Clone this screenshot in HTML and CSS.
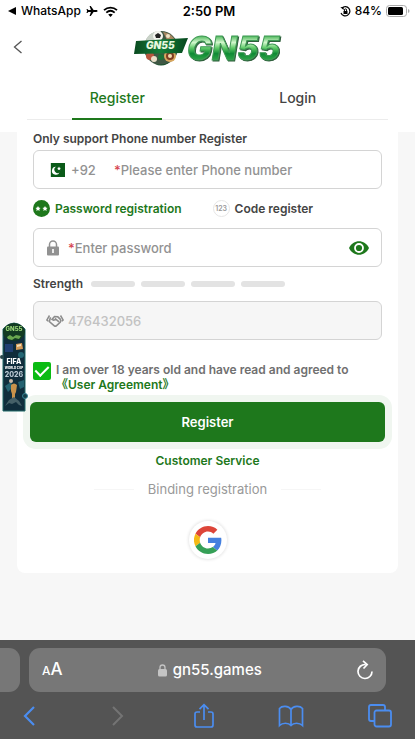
FILE: index.html
```html
<!DOCTYPE html>
<html lang="en">
<head>
    <meta charset="UTF-8">
    <meta name="viewport" content="width=device-width, initial-scale=1">
    <title>GN55 Register</title>
    <link rel="stylesheet" href="styles.css">
</head>
<body>
<!-- status bar -->
<div class="status">
    <div class="status-left">
        <svg width="8" height="10" viewBox="0 0 8 10"><path d="M8 1v8L0 5z"/></svg>
        <span>WhatsApp</span>
        <svg class="plane" width="12" height="12" viewBox="0 0 12 12"><path d="M11.5 6c0-.6-.5-.9-1.200-.9H7.600L4.800 1H3.600l1.300 4.100H2.400L1.300 3.900H.500L1.100 6 .500 8.100h.8l1.100-1.200h2.500L3.600 11h1.200l2.800-4.100h2.700c.7 0 1.200-.3 1.200-.9z"/></svg>
        <svg width="15" height="11" viewBox="0 0 15 11"><path d="M1 4.200C4.800.8 10.200.8 14 4.200M3.300 6.600c2.500-2.200 5.900-2.200 8.400 0" fill="none" stroke="#000" stroke-width="1.800"/><path d="M5.200 8.600c1.400-1.200 3.200-1.200 4.600 0L7.500 11z"/></svg>
    </div>
    <div class="status-time">2:50 PM</div>
    <div class="status-right">
        <svg width="11" height="11" viewBox="0 0 11 11"><path d="M2 2a4.600 4.600 0 1 1-1 5" fill="none" stroke="#000" stroke-width="1.200"/><path d="M.300 1.200 3.700 1v3z"/><path d="M3.500 5h4v3h-4z"/><path d="M4.400 5.200V4a1.100 1.100 0 0 1 2.200 0v1.200" fill="none" stroke="#000"/></svg>
        <span>84%</span>
        <svg width="24" height="12" viewBox="0 0 24 12"><rect x=".5" y=".5" width="20" height="11" rx="3" fill="none" stroke="#aaa"/><rect x="2" y="2" width="15" height="8" rx="1.500"/><path d="M22 4v4q1.500-.5 1.500-2T22 4z" fill="#aaa"/></svg>
    </div>
</div>

<!-- header -->
<header class="header">
    <button class="back" type="button" aria-label="Back">
        <svg width="10" height="14" viewBox="0 0 10 14"><path d="M8.500 1 1.500 7l7 6" fill="none" stroke="#555" stroke-width="1.300"/></svg>
    </button>
    <a class="logo" href="#" aria-label="GN55">
        <svg width="154" height="46" viewBox="-2 -4 154 46">
            <defs>
                <linearGradient id="shine" x1="0" y1="0" x2="0" y2="1">
                    <stop offset="0.2" stop-color="#4fb85c"/>
                    <stop offset="0.36" stop-color="#d3f7cd"/>
                    <stop offset="0.5" stop-color="#5fca68"/>
                    <stop offset="0.64" stop-color="#0f8a34"/>
                    <stop offset="0.8" stop-color="#2ea548"/>
                </linearGradient>
                <linearGradient id="ribbon">
                    <stop offset="0" stop-color="#0a4a20"/>
                    <stop offset="0.5" stop-color="#15803a"/>
                    <stop offset="1" stop-color="#06471d"/>
                </linearGradient>
            </defs>
            <circle cx="28" cy="20" r="17" fill="#3f5744"/>
            <path d="M12 14C15 5 22 3 28 3l-4 9z" fill="#c9d2c8"/>
            <path d="M30 4c7 1 11 5 13 10l-9-2z" fill="#a98862"/>
            <circle cx="25" cy="8" r="5" fill="#f3f4ee"/>
            <path d="m25 5 3 2-1 3h-4l-1-3z" fill="#222"/>
            <circle cx="35" cy="8" r="2" fill="#eee2c6"/>
            <circle cx="17" cy="28" r="4" fill="#b8553e"/>
            <circle cx="21" cy="31" r="3" fill="#eadfc9"/>
            <circle cx="28" cy="29" r="3" fill="#1c7438"/>
            <circle cx="37" cy="28" r="6" fill="#d9a860"/>
            <circle cx="37" cy="28" r="4" fill="#7f3d23"/>
            <circle cx="37" cy="28" r="2" fill="#f2dcae"/>
            <path d="M18 34q9 5 19 0l-3 2q-6 3-12 0z" fill="#174d29"/>
            <path d="M3 13 55 10l-6 15-48 1z" fill="url(#ribbon)"/>
            <text class="logo-small" x="13" y="21">GN55</text>
            <text class="logo-big" x="54" y="32" fill="url(#shine)">GN55</text>
        </svg>
    </a>
</header>

<main class="main">
    <div class="card">
        <nav class="tabs">
            <a class="tab current" href="#">Register</a>
            <a class="tab" href="#">Login</a>
        </nav>

        <form class="form">
            <label class="title" for="phone">Only support Phone number Register</label>
            <div class="field">
                <svg class="flag" width="15" height="14" viewBox="0 0 15 14"><path d="M0 0h15v14H0z" fill="#0a5a18"/><path d="M0 0h1v14H0z" fill="#d8e5d8"/><path d="M9.500 9.500A4 4 0 1 1 6 3.800a3.300 3.300 0 1 0 3.500 5.700z" fill="#fff"/><path d="m9 3.500.6 1.200 1.400.2-1 .9.200 1.400L9 6.500l-1.200.7.200-1.400-1-.9 1.400-.2z" fill="#fff"/></svg>
                <span class="code">+92</span>
                <span class="star">*</span>
                <input id="phone" type="tel" placeholder="Please enter Phone number">
            </div>

            <div class="modes">
                <button class="mode active" type="button">
                    <svg width="17" height="17" viewBox="0 0 17 17"><circle cx="8.500" cy="8.500" r="8.500" fill="#1e781c"/><path d="m5 6 .8 1.600 1.800.3-1.300 1.200.3 1.800L5 10l-1.600.9.3-1.800-1.300-1.200 1.800-.3zM12 6l.8 1.600 1.800.3-1.300 1.200.3 1.800L12 10l-1.600.9.3-1.800-1.300-1.200 1.800-.3z" fill="#fff"/></svg>
                    Password registration
                </button>
                <button class="mode" type="button">
                    <span class="digits">123</span>
                    Code register
                </button>
            </div>

            <div class="field">
                <svg class="lock" width="14" height="16" viewBox="0 0 14 16"><path d="M3.500 7V4.500a3.500 3.500 0 0 1 7 0V7" fill="none" stroke="#919191" stroke-width="1.500"/><rect x="1" y="6.500" width="12" height="9" rx="1" fill="#919191"/><path d="M7 9v4" stroke="#fff" stroke-width="1.600"/></svg>
                <span class="star">*</span>
                <input type="password" placeholder="Enter password" aria-label="Password">
                <button class="eye" type="button" aria-label="Show password">
                    <svg width="20" height="14" viewBox="0 0 20 14"><path d="M0 7C4-2 16-2 20 7 16 16 4 16 0 7z" fill="#1e781c"/><circle cx="10" cy="7" r="4" fill="none" stroke="#fff" stroke-width="1.800"/></svg>
                </button>
            </div>

            <div class="strength">
                <span class="strength-name">Strength</span>
                <i></i><i></i><i></i><i></i>
            </div>

            <div class="field disabled">
                <svg class="hands" width="18" height="14" viewBox="0 0 18 14"><path d="M3.500 1.500.8 6l1.500 1.300M14.500 1.500 17.200 6l-1.500 1.300" fill="none" stroke="#8c8c8c" stroke-width="1.500"/><path d="M4.500 3.200 3.300 7.500l5 4.300q1 .7 2 0l3.900-3.500q1-1.500.2-3L11.800 2.800 8.500 2.500 6 5.500q1.800 1.500 3.500-.6l3.500 3" fill="none" stroke="#8c8c8c" stroke-width="1.600"/></svg>
                <input type="text" value="476432056" aria-label="Invite code" disabled>
            </div>

            <div class="agree">
                <input id="agree" type="checkbox" checked>
                <div>
                    <label for="agree">I am over 18 years old and have read and agreed to</label>
                    <a href="#">《User Agreement》</a>
                </div>
            </div>

            <button class="submit" type="submit">Register</button>
        </form>

        <a class="service" href="#">Customer Service</a>
        <div class="binding">Binding registration</div>
        <button class="google" type="button" aria-label="Google">
            <svg width="28" height="28" viewBox="0 0 48 48"><path fill="#dd4539" d="M24 9.500c3.540 0 6.710 1.220 9.210 3.600l6.850-6.850C35.900 2.380 30.470 0 24 0 14.620 0 6.510 5.380 2.560 13.220l7.980 6.190C12.430 13.720 17.740 9.500 24 9.500z"/><path fill="#4580df" d="M46.980 24.550c0-1.570-.15-3.090-.38-4.550H24v9.020h12.940c-.58 2.960-2.260 5.480-4.780 7.180l7.730 6c4.510-4.180 7.090-10.360 7.090-17.650z"/><path fill="#f5b915" d="M10.530 28.590A14.500 14.500 0 0 1 10.530 19.410l-7.980-6.190a24 24 0 0 0 0 21.560z"/><path fill="#36a057" d="M24 48c6.480 0 11.930-2.130 15.890-5.810l-7.730-6c-2.150 1.450-4.920 2.300-8.160 2.300-6.260 0-11.570-4.220-13.470-9.910l-7.980 6.190C6.510 42.620 14.620 48 24 48z"/></svg>
        </button>
    </div>
</main>

<!-- floating banner over the page -->
<a class="banner" href="#" aria-label="FIFA World Cup 2026">
    <svg width="28" height="90" viewBox="0 0 28 90">
        <path d="M3 7Q14-5 25 7v82H3z" fill="#102d3c" stroke="#216a68"/>
        <ellipse cx="14" cy="10" rx="11" ry="9" fill="#123b22"/>
        <text class="banner-logo" x="14" y="9">GN55</text>
        <path d="m7 15 3-2 3 2 3-2 5 1-2 3-4-1-3 2-4-1z" fill="#69a850"/>
        <path d="M5 22h8v8H5z" fill="#203f72"/>
        <path d="m16 22 6-1 1 6-7 1z" fill="#d39a58"/>
        <path d="m17 23 4-1v2l-4 1z" fill="#f3dfbb"/>
        <circle cx="21" cy="33" r="3" fill="#236674"/>
        <circle cx="2" cy="35" r="2" fill="#29464a"/>
        <text class="banner-fifa" x="14" y="42">FIFA</text>
        <text class="banner-cup" x="14" y="47">WORLD CUP</text>
        <text class="banner-year" x="14" y="55">2026</text>
        <path d="m5 64 6-4 2 5-5 5zM18 60l6-2v7l-4 2z" fill="#246271"/>
        <circle cx="11" cy="59" r="2" fill="#c9b9a7"/>
        <path d="M11 63q3-3 6 0l-1 7-1 2v5h-3v-5l-1-3z" fill="#c8924b"/>
        <path d="m5 84 4-6 5-3 5 4 3 5-3-1-3-3-4 2-3-1z" fill="#456068"/>
        <circle cx="25" cy="74" r="2.500" fill="#173e48" stroke="#388394"/>
    </svg>
</a>

<!-- browser bar -->
<footer class="browser">
    <div class="address-row">
        <div class="prev-page"></div>
        <div class="address">
            <button class="text-size" type="button" aria-label="Text size"><small>A</small>A</button>
            <div class="url">
                <svg width="9" height="13" viewBox="0 0 9 13"><path d="M2 6V3.500a2.500 2.500 0 0 1 5 0V6" fill="none" stroke="#c4c4c4" stroke-width="1.300"/><rect y="5" width="9" height="7.500" rx="1.500" fill="#c4c4c4"/></svg>
                <span>gn55.games</span>
            </div>
            <button type="button" aria-label="Reload">
                <svg width="16" height="20" viewBox="0 0 16 20"><path d="M8.500 4.500A7 7 0 1 0 15 11.500M6 .800l4.200 3.700L6.500 8.500" fill="none" stroke="#fff" stroke-width="1.700"/></svg>
            </button>
        </div>
        <div class="next-page"></div>
    </div>
    <nav class="tools">
        <button type="button" aria-label="Previous">
            <svg width="24" height="26" viewBox="0 0 24 26"><path d="M16 4 7 13l9 9" fill="none" stroke="#4b8df0" stroke-width="2.200"/></svg>
        </button>
        <button type="button" aria-label="Next" disabled>
            <svg width="24" height="26" viewBox="0 0 24 26"><path d="m8 4 9 9-9 9" fill="none" stroke="#747474" stroke-width="2"/></svg>
        </button>
        <button type="button" aria-label="Share">
            <svg width="24" height="26" viewBox="0 0 24 26"><path d="M8 9H5q-2 0-2 2v11q0 2 2 2h14q2 0 2-2V11q0-2-2-2h-3M12 17V2M7.500 6.200 12 1.700l4.500 4.500" fill="none" stroke="#4b8df0" stroke-width="1.700"/></svg>
        </button>
        <button type="button" aria-label="Bookmarks">
            <svg width="26" height="26" viewBox="0 0 26 26"><path d="M13 6.500C10.500 2.500 4 2.500 1.500 5.500v17c3-3 9-3 11.500 0 2.500-3 8.500-3 11.500 0v-17C22 2.500 15.500 2.500 13 6.500zM13 6v16.500" fill="none" stroke="#4b8df0" stroke-width="1.700"/></svg>
        </button>
        <button type="button" aria-label="Tabs">
            <svg width="26" height="26" viewBox="0 0 26 26"><path d="M7.500 18H4q-2 0-2-2V4q0-2 2-2h12q2 0 2 2v3.500" fill="none" stroke="#4b8df0" stroke-width="1.800"/><rect x="7.500" y="7.500" width="16.500" height="16" rx="2" fill="none" stroke="#4b8df0" stroke-width="1.800"/></svg>
        </button>
    </nav>
</footer>
</body>
</html>
```
FILE: styles.css
```css
* {
    margin: 0;
    padding: 0;
    box-sizing: border-box;
}

body {
    display: flex;
    flex-direction: column;
    min-height: 100vh;
    background-color: #fff;
    color: #444;
    font-family: Inter, "Noto Sans CJK SC", sans-serif;
    font-size: 12px;
    font-weight: 600;
    line-height: 16px;
}

a {
    color: inherit;
    text-decoration: none;
}

button {
    border: 0;
    background: none;
    color: inherit;
    font: inherit;
    cursor: pointer;
}

svg {
    display: block;
    flex-shrink: 0;
}

/* status bar */
.status {
    display: grid;
    grid-template-columns: 1fr auto 1fr;
    align-items: center;
    height: 22px;
    padding: 0 5px 0 8px;
    color: #000;
}

.status-left,
.status-right {
    display: flex;
    align-items: center;
    gap: 5px;
    font-weight: 500;
}

.status-time {
    font-size: 13px;
    font-weight: 600;
}

.status-right {
    justify-content: flex-end;
    gap: 4px;
}

/* header */
.header {
    display: grid;
    grid-template-columns: 1fr auto 1fr;
    align-items: center;
    height: 50px;
    padding: 0 9px;
}

.back {
    justify-self: start;
    padding: 4px;
}

.logo-small {
    font-size: 10px;
    font-weight: 900;
    font-style: italic;
    fill: #e6f7df;
}

.logo-big {
    font-size: 33px;
    font-weight: 800;
    font-style: italic;
    stroke: #3f9a55;
    stroke-width: 1px;
    filter: drop-shadow(1px 1px 0 #2f5f3c);
}

/* page */
.main {
    flex: 1;
    padding: 8px 17px 67px;
    background: linear-gradient(#fff 60px, #f7f7f7 60px);
}

.card {
    padding: 0 10px 14px;
    border-radius: 8px;
    background-color: #fff;
}

.tabs {
    display: flex;
    height: 40px;
    border-bottom: 1px solid #ececec;
}

.tab {
    position: relative;
    flex: 1;
    font-size: 14px;
    font-weight: 500;
    line-height: 35px;
    text-align: center;
}

.tab.current {
    color: #1e781c;
}

.tab.current::after {
    content: "";
    position: absolute;
    right: 25%;
    bottom: -1px;
    left: 25%;
    height: 2px;
    background-color: #1e781c;
}

.form {
    padding: 11px 6px 0;
}

.title {
    display: block;
    margin-bottom: 3px;
}

.field {
    display: flex;
    align-items: center;
    height: 39px;
    padding: 0 12px;
    border: 1px solid #d4d4d4;
    border-radius: 6px;
    color: #929292;
    font-size: 13px;
    font-weight: 500;
}

.field input {
    flex: 1;
    min-width: 0;
    border: 0;
    outline: 0;
    background: none;
    color: inherit;
    font: inherit;
}

.field input::placeholder {
    color: #929292;
    opacity: 1;
}

.flag {
    margin: 0 6px 0 4px;
}

.code {
    margin-right: 18px;
}

.star {
    color: #d64550;
}

.lock {
    margin-right: 8px;
}

.field.disabled {
    background-color: #f6f6f6;
    color: #c2c2c2;
}

.hands {
    margin-right: 4px;
}

.modes {
    display: flex;
    gap: 31px;
    padding: 11px 0;
}

.mode {
    display: flex;
    align-items: center;
    gap: 5px;
    height: 17px;
}

.mode.active {
    color: #1e781c;
}

.digits {
    width: 17px;
    height: 17px;
    border: 1px solid #e6e6e6;
    border-radius: 50%;
    color: #999;
    font-size: 7px;
    line-height: 15px;
    text-align: center;
}

.strength {
    display: flex;
    align-items: center;
    gap: 6px;
    height: 34px;
}

.strength-name {
    margin-right: 2px;
}

.strength i {
    width: 44px;
    height: 6px;
    border-radius: 3px;
    background-color: #e3e3e3;
}

.agree {
    display: flex;
    gap: 5px;
    margin: 22px 0 10px;
    color: #707070;
    line-height: 15px;
}

.agree input {
    flex-shrink: 0;
    width: 18px;
    height: 18px;
    border-radius: 2px;
    appearance: none;
    background-color: #0abb13;
}

.agree input:checked::after {
    content: "";
    display: block;
    width: 6px;
    height: 11px;
    margin: 1px auto 0;
    border: solid #fff;
    border-width: 0 2px 2px 0;
    transform: rotate(45deg);
}

.agree a {
    display: block;
    color: #1e781c;
}

.submit {
    display: block;
    width: calc(100% + 6px);
    height: 40px;
    margin: 0 -3px;
    border-radius: 6px;
    background-color: #1e781c;
    box-shadow: 0 0 0 7px #f0f6f0;
    color: #fff;
    font-size: 13px;
}

.service {
    display: table;
    margin: 11px auto 12px;
    color: #1e781c;
}

.binding {
    display: flex;
    align-items: center;
    justify-content: center;
    gap: 14px;
    color: #999;
    font-size: 13px;
    font-weight: 400;
}

.binding::before,
.binding::after {
    content: "";
    width: 40px;
    height: 1px;
    background-color: #f6f6f6;
}

.google {
    display: flex;
    align-items: center;
    justify-content: center;
    width: 38px;
    height: 38px;
    margin: 24px auto 0;
    border-radius: 50%;
    background-color: #fff;
    box-shadow: 0 0 3px 1px #e8e8e8;
}

/* floating banner */
.banner {
    position: fixed;
    top: 322px;
    left: 0;
}

.banner text {
    fill: #fff;
    font-weight: 800;
    text-anchor: middle;
}

.banner .banner-logo {
    fill: #9bd879;
    font-size: 6px;
}

.banner .banner-fifa {
    font-size: 7px;
}

.banner .banner-cup {
    font-size: 3px;
}

.banner .banner-year {
    fill: #b8c7d2;
    font-size: 7px;
}

/* browser bar */
.browser {
    background-color: #545454;
    color: #fff;
}

.address-row {
    display: flex;
    gap: 9px;
    padding-top: 8px;
}

.address {
    display: flex;
    flex: 1;
    align-items: center;
    justify-content: space-between;
    height: 44px;
    padding: 0 13px;
    border-radius: 11px;
    background-color: #777;
}

.prev-page {
    width: 20px;
    border-radius: 0 11px 11px 0;
    background-color: #777;
}

.next-page {
    width: 20px;
}

.text-size {
    font-size: 17px;
    font-weight: 500;
}

.text-size small {
    font-size: 12px;
}

.url {
    display: flex;
    align-items: center;
    gap: 6px;
    font-size: 15px;
    font-weight: 500;
}

.tools {
    display: flex;
    justify-content: space-between;
    height: 48px;
    padding: 0 22px 0 18px;
}
```
